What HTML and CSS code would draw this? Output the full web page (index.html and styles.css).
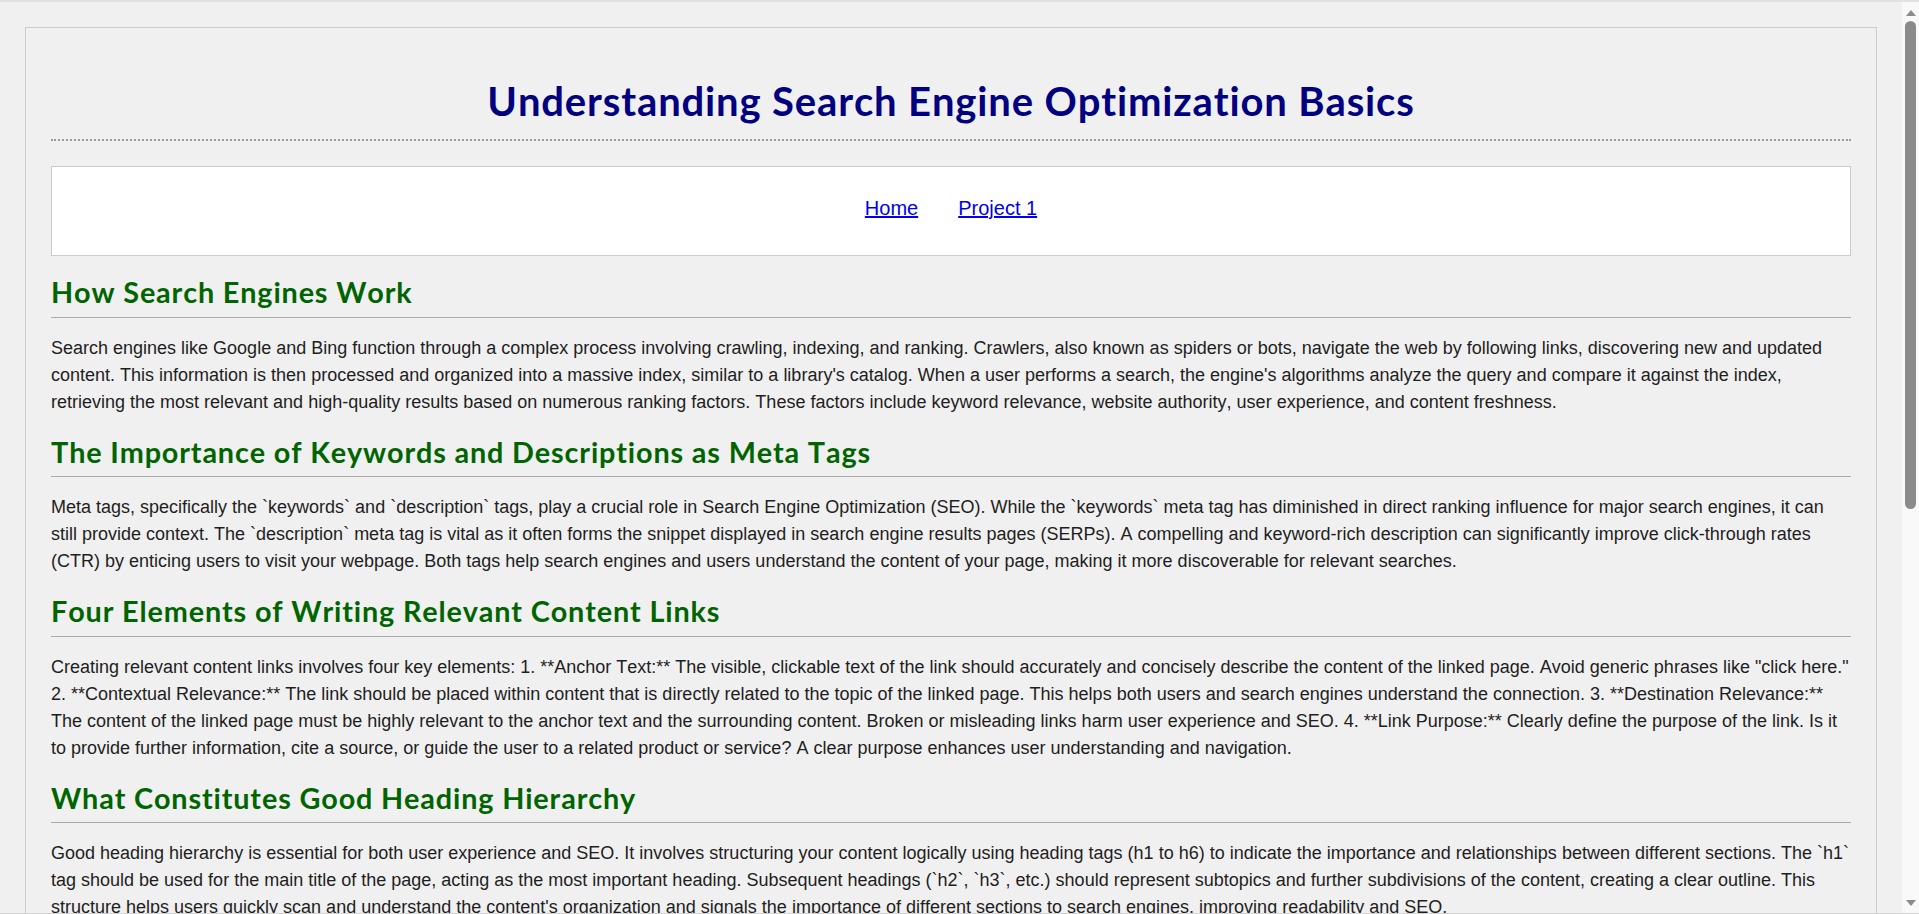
FILE: index.html
```html
<!DOCTYPE html>
<html lang="en">
<head>
<meta charset="utf-8">
<title>Understanding Search Engine Optimization Basics</title>
<link rel="stylesheet" href="styles.css">
</head>
<body>
<div class="window">
  <div class="viewport">
    <div class="container">
      <header class="page-header">
        <h1 class="page-title">Understanding Search Engine Optimization Basics</h1>
      </header>
      <nav class="main-nav">
        <a href="#" class="nav-link">Home</a>
        <a href="#" class="nav-link">Project 1</a>
      </nav>
      <main class="content">
        <section class="section">
          <h2 class="section-title">How Search Engines Work</h2>
          <p class="section-text">Search engines like Google and Bing function through a complex process involving crawling, indexing, and ranking. Crawlers, also known as spiders or bots, navigate the web by following links, discovering new and updated content. This information is then processed and organized into a massive index, similar to a library's catalog. When a user performs a search, the engine's algorithms analyze the query and compare it against the index, retrieving the most relevant and high-quality results based on numerous ranking factors. These factors include keyword relevance, website authority, user experience, and content freshness.</p>
        </section>
        <section class="section">
          <h2 class="section-title">The Importance of Keywords and Descriptions as Meta Tags</h2>
          <p class="section-text">Meta tags, specifically the `keywords` and `description` tags, play a crucial role in Search Engine Optimization (SEO). While the `keywords` meta tag has diminished in direct ranking influence for major search engines, it can still provide context. The `description` meta tag is vital as it often forms the snippet displayed in search engine results pages (SERPs). A compelling and keyword-rich description can significantly improve click-through rates (CTR) by enticing users to visit your webpage. Both tags help search engines and users understand the content of your page, making it more discoverable for relevant searches.</p>
        </section>
        <section class="section">
          <h2 class="section-title">Four Elements of Writing Relevant Content Links</h2>
          <p class="section-text">Creating relevant content links involves four key elements: 1. **Anchor Text:** The visible, clickable text of the link should accurately and concisely describe the content of the linked page. Avoid generic phrases like "click here." 2. **Contextual Relevance:** The link should be placed within content that is directly related to the topic of the linked page. This helps both users and search engines understand the connection. 3. **Destination Relevance:** The content of the linked page must be highly relevant to the anchor text and the surrounding content. Broken or misleading links harm user experience and SEO. 4. **Link Purpose:** Clearly define the purpose of the link. Is it to provide further information, cite a source, or guide the user to a related product or service? A clear purpose enhances user understanding and navigation.</p>
        </section>
        <section class="section">
          <h2 class="section-title">What Constitutes Good Heading Hierarchy</h2>
          <p class="section-text">Good heading hierarchy is essential for both user experience and SEO. It involves structuring your content logically using heading tags (h1 to h6) to indicate the importance and relationships between different sections. The `h1` tag should be used for the main title of the page, acting as the most important heading. Subsequent headings (`h2`, `h3`, etc.) should represent subtopics and further subdivisions of the content, creating a clear outline. This structure helps users quickly scan and understand the content's organization and signals the importance of different sections to search engines, improving readability and SEO.</p>
        </section>
      </main>
    </div>
  </div>
  <div class="scrollbar" aria-hidden="true">
    <div class="scroll-btn"><span class="arrow arrow-up"></span></div>
    <div class="scroll-track"><div class="scroll-thumb"></div></div>
    <div class="scroll-btn"><span class="arrow arrow-down"></span></div>
  </div>
</div>
</body>
</html>
```
FILE: styles.css
```css
html, body {
  margin: 0;
  padding: 0;
  height: 100%;
  overflow: hidden;
}

body {
  background: #f0f0f0;
  font-family: "Liberation Sans", Arial, sans-serif;
  font-size: 18px;
  font-kerning: none;
  font-variant-ligatures: none;
  color: #1e1e1e;
}

.window {
  box-sizing: border-box;
  height: 100%;
  display: flex;
  border-top: 2px solid #e2e2e2;
  border-bottom: 1px solid #d4d4d4;
}

.viewport {
  flex: 1;
  min-width: 0;
  overflow: hidden;
  background: #f0f0f0;
}

/* scrollbar column */
.scrollbar {
  width: 17px;
  flex: none;
  display: flex;
  flex-direction: column;
  background: #f9f9f9;
}

.scroll-btn {
  height: 17px;
  display: flex;
  align-items: center;
  justify-content: center;
}

.arrow {
  width: 0;
  height: 0;
  border-left: 5px solid transparent;
  border-right: 5px solid transparent;
}

.arrow-up {
  border-bottom: 6px solid #8b8b8b;
  margin-top: 4px;
}

.arrow-down {
  border-top: 6px solid #8b8b8b;
  margin-bottom: 4px;
}

.scroll-track {
  flex: 1;
  display: flex;
  justify-content: center;
}

.scroll-thumb {
  width: 11px;
  height: 488px;
  margin-top: 2px;
  border-radius: 6px;
  background: #8b8b8b;
}

/* page */
.container {
  margin: 25px;
  padding: 25px;
  border: 1px solid #cccccc;
  background: #f0f0f0;
}

.page-title {
  margin: 24px 0 25px;
  padding-bottom: 14px;
  border-bottom: 2px dotted #999999;
  font-family: Lato, "Open Sans", sans-serif;
  font-size: 40px;
  font-weight: bold;
  line-height: 48px;
  letter-spacing: 0.85px;
  text-align: center;
  color: #000080;
}

.main-nav {
  display: flex;
  justify-content: center;
  gap: 40px;
  padding: 24px 0 30px;
  border: 1px solid #cccccc;
  background: #ffffff;
}

.nav-link {
  font-size: 20px;
  line-height: 34px;
  color: #0000ee;
  text-decoration: underline;
}

.section-title {
  margin: 19px 0 17px;
  padding-bottom: 7px;
  border-bottom: 1px solid #aaaaaa;
  font-family: Lato, "Open Sans", sans-serif;
  font-size: 28.8px;
  font-weight: bold;
  line-height: 1.2;
  letter-spacing: 0.85px;
  color: #006400;
}

.section-text {
  margin: 0;
  line-height: 27px;
}
```
